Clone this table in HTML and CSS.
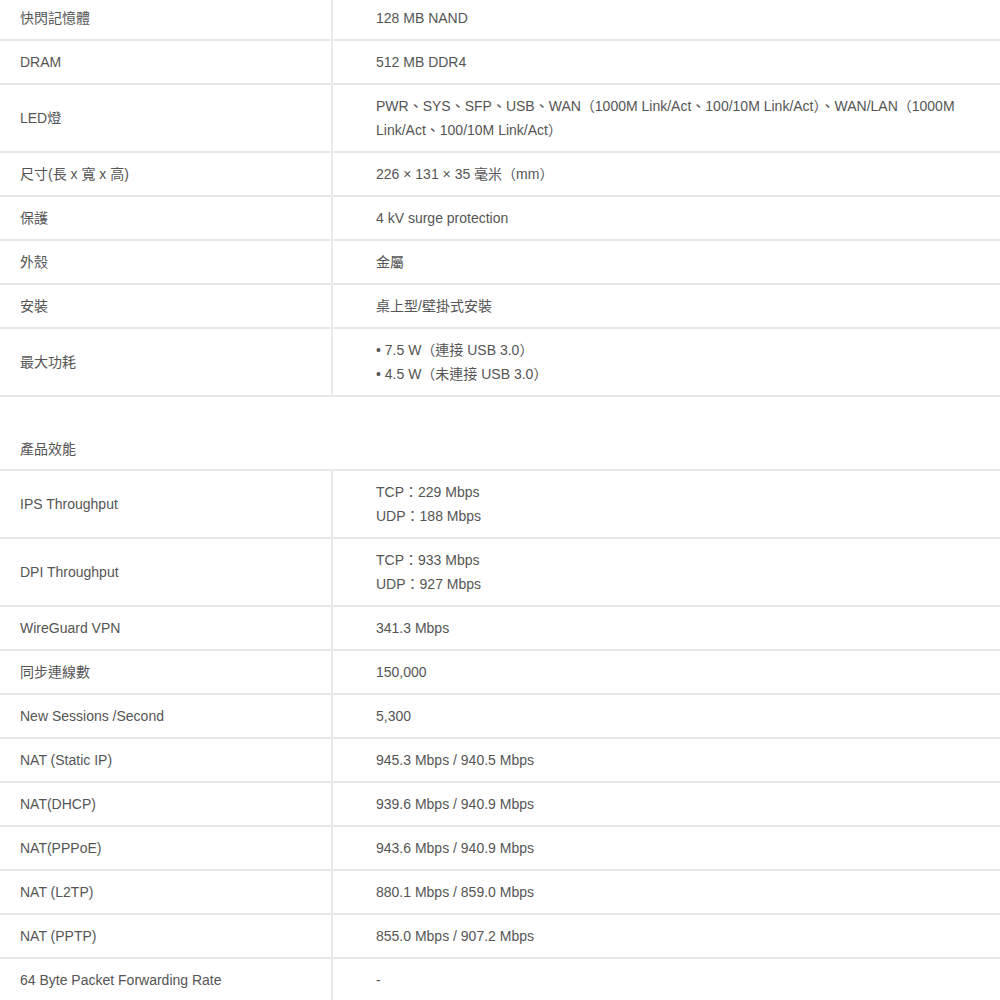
FILE: index.html
```html
<!DOCTYPE html>
<html lang="zh-Hant">
<head>
  <meta charset="UTF-8">
  <meta name="viewport" content="width=device-width, initial-scale=1.0">
  <title>規格</title>
  <link rel="stylesheet" href="styles.css">
</head>
<body>
  <table class="spec">
    <tr><td class="label">快閃記憶體</td><td class="value">128 MB NAND</td></tr>
    <tr><td class="label">DRAM</td><td class="value">512 MB DDR4</td></tr>
    <tr><td class="label">LED燈</td><td class="value">PWR、SYS、SFP、USB、WAN（1000M Link/Act、100/10M Link/Act）、WAN/LAN（1000M Link/Act、100/10M Link/Act）</td></tr>
    <tr><td class="label">尺寸(長 x 寬 x 高)</td><td class="value">226 × 131 × 35 毫米（mm）</td></tr>
    <tr><td class="label">保護</td><td class="value">4 kV surge protection</td></tr>
    <tr><td class="label">外殼</td><td class="value">金屬</td></tr>
    <tr><td class="label">安裝</td><td class="value">桌上型/壁掛式安裝</td></tr>
    <tr><td class="label">最大功耗</td><td class="value">• 7.5 W（連接 USB 3.0）<br>• 4.5 W（未連接 USB 3.0）</td></tr>
    <tr class="section"><td colspan="2">產品效能</td></tr>
    <tr><td class="label">IPS Throughput</td><td class="value">TCP：229 Mbps<br>UDP：188 Mbps</td></tr>
    <tr><td class="label">DPI Throughput</td><td class="value">TCP：933 Mbps<br>UDP：927 Mbps</td></tr>
    <tr><td class="label">WireGuard VPN</td><td class="value">341.3 Mbps</td></tr>
    <tr><td class="label">同步連線數</td><td class="value">150,000</td></tr>
    <tr><td class="label">New Sessions /Second</td><td class="value">5,300</td></tr>
    <tr><td class="label">NAT (Static IP)</td><td class="value">945.3 Mbps / 940.5 Mbps</td></tr>
    <tr><td class="label">NAT(DHCP)</td><td class="value">939.6 Mbps / 940.9 Mbps</td></tr>
    <tr><td class="label">NAT(PPPoE)</td><td class="value">943.6 Mbps / 940.9 Mbps</td></tr>
    <tr><td class="label">NAT (L2TP)</td><td class="value">880.1 Mbps / 859.0 Mbps</td></tr>
    <tr><td class="label">NAT (PPTP)</td><td class="value">855.0 Mbps / 907.2 Mbps</td></tr>
    <tr><td class="label">64 Byte Packet Forwarding Rate</td><td class="value">-</td></tr>
  </table>
</body>
</html>
```

FILE: styles.css
```css
body {
  margin: 0;
  background: #fff;
  font-family: 'Liberation Sans', 'Noto Sans CJK TC', sans-serif;
  font-size: 14px;
  color: #555;
}
.spec {
  width: 1000px;
  margin-top: -3px;
  border-collapse: collapse;
  table-layout: fixed;
}
.spec td {
  padding: 9px 20px;
  line-height: 24px;
  vertical-align: middle;
  border-bottom: 2px solid #e9e9e9;
}
.spec .label {
  width: 291px;
  border-right: 2px solid #e9e9e9;
}
.spec .value {
  padding-left: 43px;
  padding-right: 30px;
}
.spec .section td {
  padding-top: 40px;
  padding-bottom: 8px;
}
```
